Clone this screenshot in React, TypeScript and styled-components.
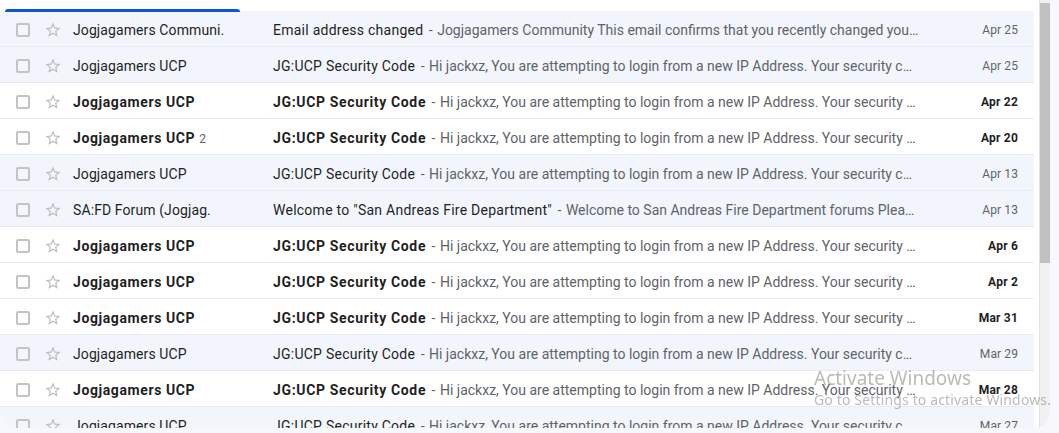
import React from "react";
import styled, { createGlobalStyle } from "styled-components";

const Global = createGlobalStyle`
  html, body { margin: 0; padding: 0; background: #f6f8fc; }
  body { font-family: Roboto, "Liberation Sans", Arial, sans-serif; overflow: hidden; }
`;

type Mail = {
  sender: string;
  count?: number;
  subject: string;
  snippet: string;
  date: string;
  unread: boolean;
};

const ucpSnippet =
  "Hi jackxz, You are attempting to login from a new IP Address. Your security code is 482913. If this was not you, please change your password immediately.";

const mails: Mail[] = [
  {
    sender: "Jogjagamers Communi.",
    subject: "Email address changed",
    snippet:
      "Jogjagamers Community This email confirms that you recently changed your email address on your account.",
    date: "Apr 25",
    unread: false,
  },
  { sender: "Jogjagamers UCP", subject: "JG:UCP Security Code", snippet: ucpSnippet, date: "Apr 25", unread: false },
  { sender: "Jogjagamers UCP", subject: "JG:UCP Security Code", snippet: ucpSnippet, date: "Apr 22", unread: true },
  { sender: "Jogjagamers UCP", count: 2, subject: "JG:UCP Security Code", snippet: ucpSnippet, date: "Apr 20", unread: true },
  { sender: "Jogjagamers UCP", subject: "JG:UCP Security Code", snippet: ucpSnippet, date: "Apr 13", unread: false },
  {
    sender: "SA:FD Forum (Jogjag.",
    subject: "Welcome to \"San Andreas Fire Department\"",
    snippet: "Welcome to San Andreas Fire Department forums Please keep this email for your records.",
    date: "Apr 13",
    unread: false,
  },
  { sender: "Jogjagamers UCP", subject: "JG:UCP Security Code", snippet: ucpSnippet, date: "Apr 6", unread: true },
  { sender: "Jogjagamers UCP", subject: "JG:UCP Security Code", snippet: ucpSnippet, date: "Apr 2", unread: true },
  { sender: "Jogjagamers UCP", subject: "JG:UCP Security Code", snippet: ucpSnippet, date: "Mar 31", unread: true },
  { sender: "Jogjagamers UCP", subject: "JG:UCP Security Code", snippet: ucpSnippet, date: "Mar 29", unread: false },
  { sender: "Jogjagamers UCP", subject: "JG:UCP Security Code", snippet: ucpSnippet, date: "Mar 28", unread: true },
  { sender: "Jogjagamers UCP", subject: "JG:UCP Security Code", snippet: ucpSnippet, date: "Mar 27", unread: false },
];

const Card = styled.div`
  width: 1050px;
  height: 428px;
  background: #ffffff;
  border-radius: 0 0 16px 16px;
  overflow: hidden;
  display: flex;
`;

const ListPane = styled.div`
  width: 1035px;
  display: flex;
  flex-direction: column;
  overflow: hidden;
`;

const TabStrip = styled.div`
  height: 11px;
  flex: none;
  padding-left: 5px;
  position: relative;
  z-index: 1;
`;

const TabIndicator = styled.div`
  width: 235px;
  height: 3px;
  margin-top: 9px;
  background: #0b57d0;
  border-radius: 3px 3px 0 0;
`;

const Row = styled.div<{ $unread: boolean }>`
  flex: none;
  height: 36px;
  box-sizing: border-box;
  padding-top: 3px;
  border-bottom: 1px solid #e7ebf0;
  background: ${(p) => (p.$unread ? "#ffffff" : "#f2f6fc")};
  display: flex;
  align-items: center;
  padding-left: 16px;
  font-size: 14px;
  color: #1f1f1f;
`;

const CheckBox = styled.span`
  width: 14px;
  height: 14px;
  box-sizing: border-box;
  border: 2px solid #c4c4c4;
  border-radius: 2px;
  flex: none;
`;

const StarWrap = styled.span`
  margin-left: 14px;
  width: 18px;
  height: 18px;
  flex: none;
  display: flex;
`;

const Sender = styled.span<{ $unread: boolean }>`
  margin-left: 11px;
  width: 200px;
  flex: none;
  box-sizing: border-box;
  padding-right: 16px;
  white-space: nowrap;
  overflow: hidden;
  font-weight: ${(p) => (p.$unread ? 700 : 400)};
  letter-spacing: ${(p) => (p.$unread ? "0.6px" : "0.1px")};
  color: #1f1f1f;
`;

const Count = styled.span`
  font-weight: 400;
  font-size: 12px;
  letter-spacing: 0;
  color: #5f6368;
  margin-left: 4px;
`;

const Content = styled.span`
  flex: 1;
  min-width: 0;
  white-space: nowrap;
  overflow: hidden;
  text-overflow: ellipsis;
  color: #5f6368;
`;

const Subject = styled.span<{ $unread: boolean }>`
  font-weight: ${(p) => (p.$unread ? 700 : 400)};
  letter-spacing: ${(p) => (p.$unread ? "0.65px" : "0.25px")};
  color: #1f1f1f;
`;

const Separator = styled.span`
  margin: 0 1px 0 2px;
`;

const DateCell = styled.span<{ $unread: boolean }>`
  width: 114px;
  flex: none;
  box-sizing: border-box;
  padding-right: 16px;
  text-align: right;
  font-size: 12px;
  font-weight: ${(p) => (p.$unread ? 700 : 400)};
  letter-spacing: ${(p) => (p.$unread ? "0.2px" : "0.1px")};
  color: ${(p) => (p.$unread ? "#1f1f1f" : "#5f6368")};
`;

const ScrollTrack = styled.div`
  width: 10px;
  margin-left: 5px;
  flex: none;
  background: #f1f1f1;
  border-left: 1px solid #e3e3e3;
  padding-top: 3px;
`;

const ScrollThumb = styled.div`
  height: 260px;
  background: #c1c1c1;
`;

const Watermark = styled.div`
  position: fixed;
  left: 814px;
  top: 367px;
  color: rgba(140, 140, 140, 0.6);
  font-family: "Noto Sans", "Open Sans", sans-serif;
  pointer-events: none;
  line-height: 1.2;
`;

const WmTitle = styled.div`
  font-size: 19px;
`;

const WmSub = styled.div`
  font-size: 14px;
  letter-spacing: 0.15px;
  margin-top: 2px;
`;

function StarIcon() {
  return (
    <svg width="18" height="18" viewBox="0 0 24 24" fill="#bdbdbd">
      <path d="M22 9.24l-7.19-.62L12 2 9.19 8.63 2 9.24l5.46 4.73L5.82 21 12 17.27 18.18 21l-1.63-7.03L22 9.24zM12 15.4l-3.76 2.27 1-4.28-3.32-2.88 4.38-.38L12 6.1l1.71 4.04 4.38.38-3.32 2.88 1 4.28L12 15.4z" />
    </svg>
  );
}

export default function App() {
  return (
    <>
      <Global />
      <Card>
        <ListPane>
          <TabStrip>
            <TabIndicator />
          </TabStrip>
          {mails.map((m, i) => (
            <Row key={i} $unread={m.unread}>
              <CheckBox />
              <StarWrap>
                <StarIcon />
              </StarWrap>
              <Sender $unread={m.unread}>
                {m.sender}
                {m.count ? <Count>{m.count}</Count> : null}
              </Sender>
              <Content>
                <Subject $unread={m.unread}>{m.subject}</Subject>
                <Separator> - </Separator>
                {m.snippet}
              </Content>
              <DateCell $unread={m.unread}>{m.date}</DateCell>
            </Row>
          ))}
        </ListPane>
        <ScrollTrack>
          <ScrollThumb />
        </ScrollTrack>
      </Card>
      <Watermark>
        <WmTitle>Activate Windows</WmTitle>
        <WmSub>Go to Settings to activate Windows.</WmSub>
      </Watermark>
    </>
  );
}
